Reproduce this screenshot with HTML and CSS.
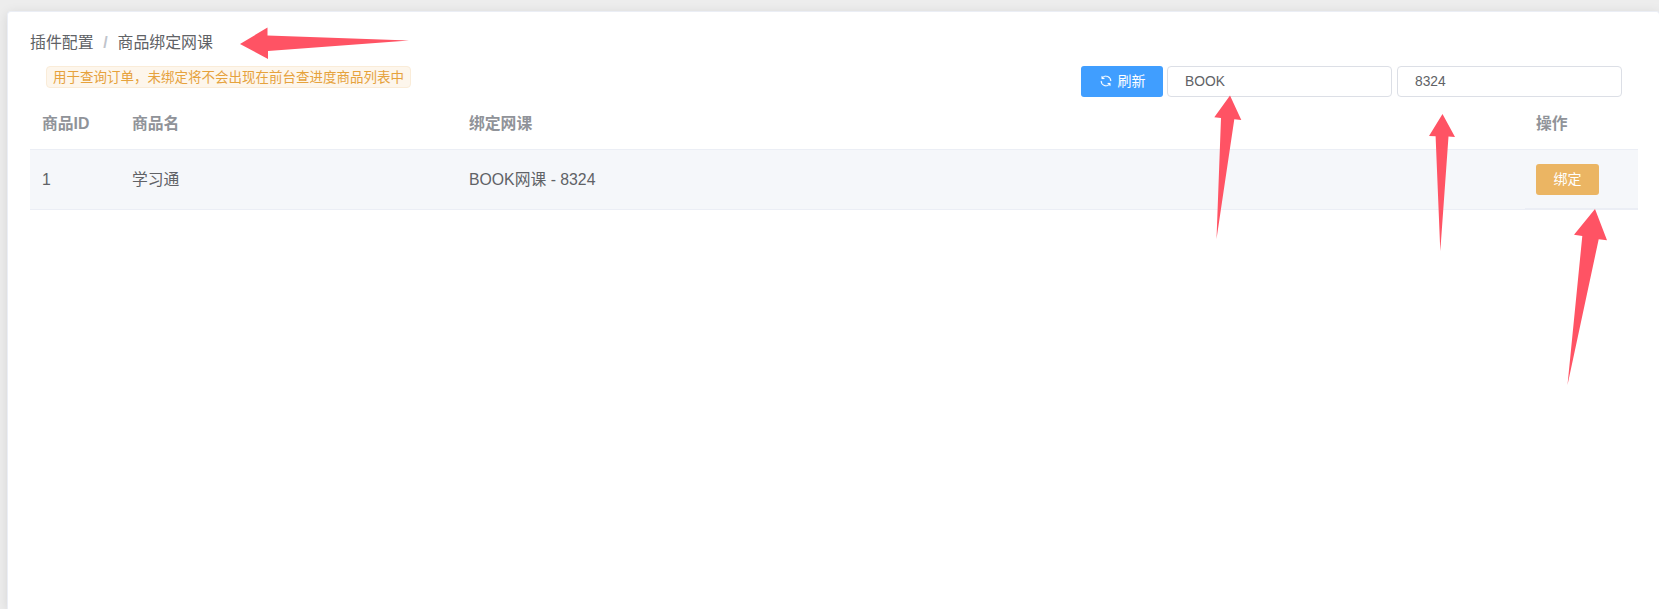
FILE: index.html
```html
<!DOCTYPE html>
<html lang="zh-CN">
<head>
    <meta charset="UTF-8">
    <meta name="viewport" content="width=device-width, initial-scale=1.0">
    <title>商品绑定网课</title>
    <link rel="stylesheet" href="styles.css">
</head>
<body>
<div class="card">
    <div class="breadcrumb">
        <span>插件配置</span>
        <span class="separator">/</span>
        <span>商品绑定网课</span>
    </div>

    <div class="toolbar">
        <span class="tag">用于查询订单，未绑定将不会出现在前台查进度商品列表中</span>
        <div class="toolbar-right">
            <button type="button" class="btn btn-primary">
                <svg class="icon" viewBox="0 0 1024 1024" fill="currentColor"><path d="M771.776 794.88A384 384 0 0 1 128 512h64a320 320 0 0 0 555.712 216.448H654.72a32 32 0 1 1 0-64h149.056a32 32 0 0 1 32 32v148.928a32 32 0 1 1-64 0v-50.56zM276.288 295.616h92.992a32 32 0 0 1 0 64H220.16a32 32 0 0 1-32-32V178.56a32 32 0 0 1 64 0v50.56A384 384 0 0 1 896.128 512h-64a320 320 0 0 0-555.776-216.384z"/></svg>
                <span>刷新</span>
            </button>
            <input type="text" class="input" value="BOOK">
            <input type="text" class="input" value="8324">
        </div>
    </div>

    <table class="table">
        <thead>
            <tr>
                <th class="col-id">商品ID</th>
                <th class="col-name">商品名</th>
                <th>绑定网课</th>
                <th class="col-action">操作</th>
            </tr>
        </thead>
        <tbody>
            <tr>
                <td>1</td>
                <td>学习通</td>
                <td>BOOK网课 - 8324</td>
                <td class="action"><button type="button" class="btn btn-warning">绑定</button></td>
            </tr>
        </tbody>
    </table>
</div>

<svg class="arrows" viewBox="0 0 1659 609">
    <polygon points="240,44 267.5,27.5 267.5,35.5 409,40.5 268,51 268,59"/>
    <polygon points="1230,95.5 1241.3,120 1234.3,119.3 1216.5,239 1221,118 1214.3,117.3"/>
    <polygon points="1442.5,114 1455,137 1448.5,136.5 1440.3,251 1435.6,136.3 1429,136"/>
    <polygon points="1595,209 1607,240.3 1598.7,239.2 1567.5,385 1582.3,236 1574,234.8"/>
</svg>
</body>
</html>
```
FILE: styles.css
```css
* {
    box-sizing: border-box;
}

body {
    display: flow-root;
    margin: 0;
    height: 609px;
    overflow: hidden;
    background-color: #ededed;
    font-family: "Liberation Sans", "Noto Sans CJK SC", sans-serif;
    font-size: 15.8px;
    color: #606266;
}

.card {
    margin: 11px -1px 0 7px;
    height: 598px;
    padding: 20px 21px 0 22px;
    background-color: #fff;
    border: 1px solid #ebeef5;
    border-bottom: none;
    border-radius: 4px 4px 0 0;
    box-shadow: 0 2px 12px rgba(0, 0, 0, 0.1);
}

.breadcrumb {
    display: flex;
    height: 22px;
    line-height: 22px;
    font-size: 15.9px;
}

.separator {
    margin: 0 9px;
    width: 6px;
    color: #c0c4cc;
    font-weight: bold;
    text-align: center;
}

.toolbar {
    display: flex;
    justify-content: space-between;
    align-items: flex-start;
    margin-top: 12px;
    padding: 0 16px;
}

.tag {
    height: 22px;
    padding: 0 6px;
    line-height: 21px;
    font-size: 13.5px;
    color: #e6a23c;
    background-color: #fdf6ec;
    border: 1px solid #faecd8;
    border-radius: 4px;
}

.toolbar-right {
    display: flex;
}

.btn {
    display: flex;
    justify-content: center;
    align-items: center;
    height: 31px;
    padding: 0 0 1px;
    border: none;
    border-radius: 3px;
    color: #fff;
    font-family: inherit;
    font-size: 14px;
    line-height: 18px;
    cursor: pointer;
}

.btn-primary {
    width: 82px;
    margin-right: 4px;
    gap: 5px;
    background-color: #409eff;
}

.btn-warning {
    width: 63px;
    background-color: #ebb563;
}

.icon {
    width: 14px;
    height: 14px;
    stroke: currentColor;
    stroke-width: 16;
}

.input {
    width: 225px;
    height: 31px;
    padding: 0 17px 1px;
    border: 1px solid #dcdfe6;
    border-radius: 4px;
    outline: none;
    color: #606266;
    font-family: inherit;
    font-size: 13.8px;
}

.input + .input {
    margin-left: 5px;
}

.table {
    width: 100%;
    border-collapse: separate;
    border-spacing: 0;
    table-layout: fixed;
}

.table th,
.table td {
    padding: 0 12px;
    border-bottom: 1px solid #ebeef5;
    line-height: 22px;
    text-align: left;
}

.table th {
    height: 53px;
    padding-top: 1px;
    color: #909399;
    font-weight: bold;
}

.table td {
    height: 60px;
    background-color: #f5f7fa;
}

.table .action {
    padding: 0 11px;
    border-bottom-width: 2px;
}

.col-id {
    width: 90px;
}

.col-name {
    width: 337px;
}

.table .col-action {
    width: 113px;
    padding: 1px 11px 0;
}

.arrows {
    position: absolute;
    top: 0;
    left: 0;
    width: 1659px;
    height: 609px;
    fill: #ff5364;
    pointer-events: none;
}
```
